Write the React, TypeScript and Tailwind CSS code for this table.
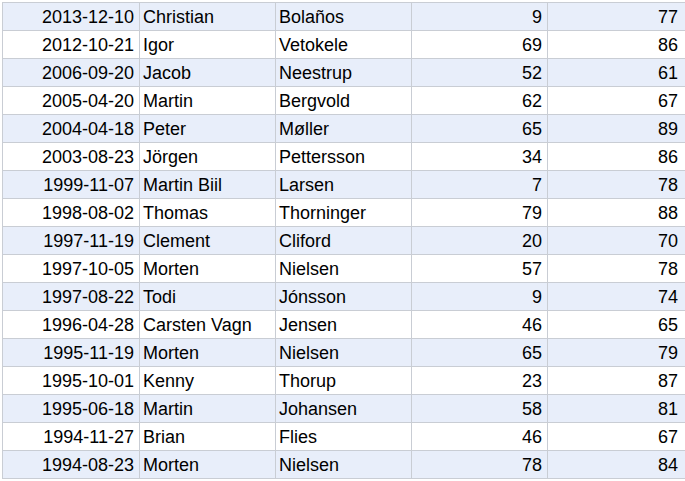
const rows: [string, string, string, number, number][] = [
  ['2013-12-10', 'Christian', 'Bolaños', 9, 77],
  ['2012-10-21', 'Igor', 'Vetokele', 69, 86],
  ['2006-09-20', 'Jacob', 'Neestrup', 52, 61],
  ['2005-04-20', 'Martin', 'Bergvold', 62, 67],
  ['2004-04-18', 'Peter', 'Møller', 65, 89],
  ['2003-08-23', 'Jörgen', 'Pettersson', 34, 86],
  ['1999-11-07', 'Martin Biil', 'Larsen', 7, 78],
  ['1998-08-02', 'Thomas', 'Thorninger', 79, 88],
  ['1997-11-19', 'Clement', 'Cliford', 20, 70],
  ['1997-10-05', 'Morten', 'Nielsen', 57, 78],
  ['1997-08-22', 'Todi', 'Jónsson', 9, 74],
  ['1996-04-28', 'Carsten Vagn', 'Jensen', 46, 65],
  ['1995-11-19', 'Morten', 'Nielsen', 65, 79],
  ['1995-10-01', 'Kenny', 'Thorup', 23, 87],
  ['1995-06-18', 'Martin', 'Johansen', 58, 81],
  ['1994-11-27', 'Brian', 'Flies', 46, 67],
  ['1994-08-23', 'Morten', 'Nielsen', 78, 84],
];

const App = () => {
  return (
    <div
      className="w-[685px] h-[481px] overflow-hidden bg-white pt-[2px] pl-[2px] text-[18px] text-black"
      style={{ fontFamily: '"Liberation Sans", Arial, sans-serif' }}
    >
      <div className="border-t border-l border-[#c9cdd4]">
        {rows.map((r, i) => (
          <div
            key={i}
            className={`flex h-[28px] border-b border-[#c9cdd4] ${
              i % 2 === 0 ? 'bg-[#e8eefa]' : 'bg-white'
            }`}
          >
            <div className="w-[137px] shrink-0 border-r border-[#c9cdd4] flex items-center justify-end pr-[5px] pt-[1px]">
              {r[0]}
            </div>
            <div className="w-[136px] shrink-0 border-r border-[#c9cdd4] flex items-center pl-[3px] pt-[1px] whitespace-nowrap">
              {r[1]}
            </div>
            <div className="w-[136px] shrink-0 border-r border-[#c9cdd4] flex items-center pl-[3px] pt-[1px]">
              {r[2]}
            </div>
            <div className="w-[136px] shrink-0 border-r border-[#c9cdd4] flex items-center justify-end pr-[5px] pt-[1px]">
              {r[3]}
            </div>
            <div className="flex-1 flex items-center justify-end pr-[7px] pt-[1px]">
              {r[4]}
            </div>
          </div>
        ))}
      </div>
    </div>
  );
};

export default App;
